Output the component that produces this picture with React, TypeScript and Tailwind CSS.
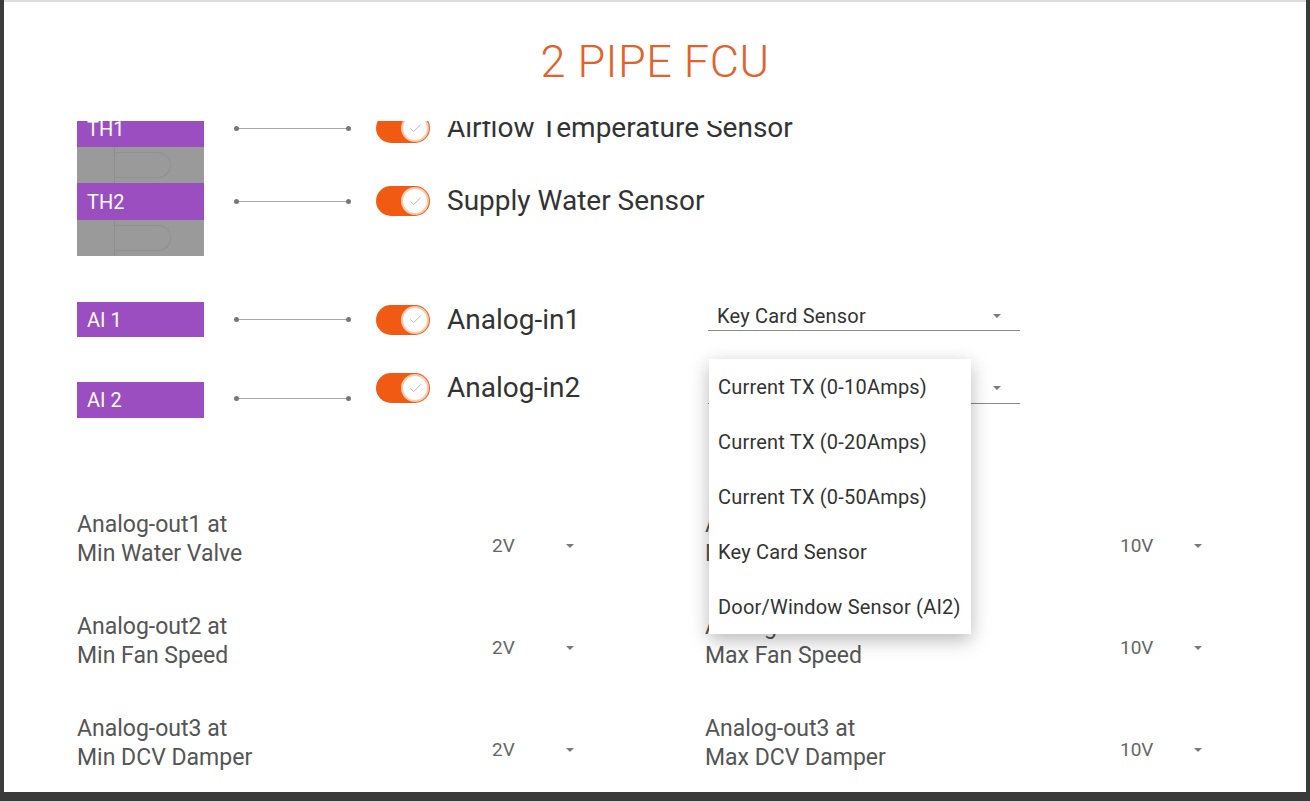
import { Check } from "lucide-react";

const menuOptions = [
  "Current TX (0-10Amps)",
  "Current TX (0-20Amps)",
  "Current TX (0-50Amps)",
  "Key Card Sensor",
  "Door/Window Sensor (AI2)",
];

const outputs = [
  { min: ["Analog-out1 at", "Min Water Valve"], max: ["Analog-out1 at", "Max Water Valve"] },
  { min: ["Analog-out2 at", "Min Fan Speed"], max: ["Analog-out2 at", "Max Fan Speed"] },
  { min: ["Analog-out3 at", "Min DCV Damper"], max: ["Analog-out3 at", "Max DCV Damper"] },
];

function Caret() {
  return (
    <svg width="10" height="6" viewBox="0 0 10 6" className="shrink-0">
      <path d="M1 1 L5 5 L9 1 Z" fill="#7a7a7a" />
    </svg>
  );
}

function Connector() {
  return (
    <div className="flex items-center w-[117px] ml-[30px] shrink-0">
      <span className="w-[5px] h-[5px] rounded-full bg-[#777]" />
      <span className="flex-1 h-px bg-[#a8a8a8]" />
      <span className="w-[5px] h-[5px] rounded-full bg-[#777]" />
    </div>
  );
}

function Toggle() {
  return (
    <div className="relative w-[54px] h-[30px] ml-[25px] shrink-0 rounded-full bg-[#f15a12] flex items-center justify-end pr-[1px]">
      <div className="w-[28px] h-[28px] rounded-full bg-white border-2 border-[#f8c9ae] flex items-center justify-center">
        <Check size={15} strokeWidth={1.5} color="#b5b5b5" />
      </div>
    </div>
  );
}

// faint leftover shape drawn on the grey filler blocks
function Ghost() {
  return (
    <div className="h-full flex items-center">
      <div className="ml-[37px] h-full border-l border-[#8e8e8e]" />
      <div className="w-[56px] h-[26px] rounded-r-full border border-l-0 border-[#919191]" />
    </div>
  );
}

function PortLabel({ text, height }: { text: string; height: string }) {
  return (
    <div
      className={`w-[127px] ${height} shrink-0 bg-[#9b4ec0] text-white text-[20px] pl-[10px] flex items-center`}
    >
      {text}
    </div>
  );
}

function Dropdown({ value, height }: { value: string; height: string }) {
  return (
    <div
      className={`w-[312px] ${height} self-start border-b border-[#8a8a8a] flex items-center justify-between pl-[9px] pr-[18px] shrink-0`}
    >
      <span className="text-[20px] tracking-[0.2px] text-[#333]">{value}</span>
      <Caret />
    </div>
  );
}

function OutputCell({ lines, value }: { lines: string[]; value: string }) {
  return (
    <div className="flex h-[102px] w-[628px] shrink-0">
      <div className="w-[415px] shrink-0 pt-[15px] text-[23px] leading-[29px] text-[#555]">
        <div>{lines[0]}</div>
        <div>{lines[1]}</div>
      </div>
      <div className="flex items-center">
        <span className="w-[73px] text-[19px] text-[#666]">{value}</span>
        <Caret />
      </div>
    </div>
  );
}

export default function App() {
  return (
    <div className="w-[1310px] h-[801px] bg-[#3a3a3a] pl-[4px] pr-[4px] pb-[9px] font-['Roboto',sans-serif] overflow-hidden">
      <div className="relative h-full bg-white border-t-2 border-[#dedede] flex flex-col overflow-hidden">
        <div className="h-[119px] shrink-0 flex items-center justify-center">
          <h1 className="text-[45px] font-light text-[#e2622b] tracking-[0.5px]">2 PIPE FCU</h1>
        </div>

        <div className="flex-1 overflow-hidden">
          <div className="-mt-[11px] pl-[73px]">
            {["TH1", "TH2"].map((th, i) => (
              <div key={th} className="flex items-start h-[73px]">
                <div className="w-[127px] shrink-0">
                  <PortLabel text={th} height="h-[37px]" />
                  <div className="h-[36px] bg-[#9a9a9a]">
                    <Ghost />
                  </div>
                </div>
                <div className="flex items-center h-[36px]">
                  <Connector />
                  <Toggle />
                  <span className="ml-[17px] text-[28px] text-[#333] whitespace-nowrap">
                    {i === 0 ? "Airflow Temperature Sensor" : "Supply Water Sensor"}
                  </span>
                </div>
              </div>
            ))}

            <div className="flex items-center h-[35px] mt-[46px]">
              <PortLabel text="AI 1" height="h-[35px]" />
              <Connector />
              <Toggle />
              <span className="ml-[17px] w-[261px] text-[28px] text-[#333]">Analog-in1</span>
              <Dropdown value="Key Card Sensor" height="h-[29px]" />
            </div>

            <div className="flex items-start h-[36px] mt-[45px]">
              <PortLabel text="AI 2" height="h-[36px]" />
              <div className="h-[32px] flex items-center">
                <Connector />
              </div>
              <div className="-mt-[9px] flex items-center h-[30px]">
                <Toggle />
                <span className="ml-[17px] w-[261px] text-[28px] text-[#333]">Analog-in2</span>
                <div className="h-[30px] flex items-start -mt-[0.5px]">
                  <Dropdown value="" height="h-[31px]" />
                </div>
              </div>
            </div>

            <div className="mt-[77px]">
              {outputs.map((o) => (
                <div key={o.min[0]} className="flex">
                  <OutputCell lines={o.min} value="2V" />
                  <OutputCell lines={o.max} value="10V" />
                </div>
              ))}
            </div>
          </div>
        </div>

        <div className="absolute left-[705px] top-[357px] w-[262px] bg-white shadow-[0_6px_18px_rgba(0,0,0,0.28)]">
          {menuOptions.map((opt) => (
            <div key={opt} className="h-[55px] flex items-center pl-[9px] text-[20px] tracking-[0.2px] text-[#333] whitespace-nowrap">
              {opt}
            </div>
          ))}
        </div>
      </div>
    </div>
  );
}
